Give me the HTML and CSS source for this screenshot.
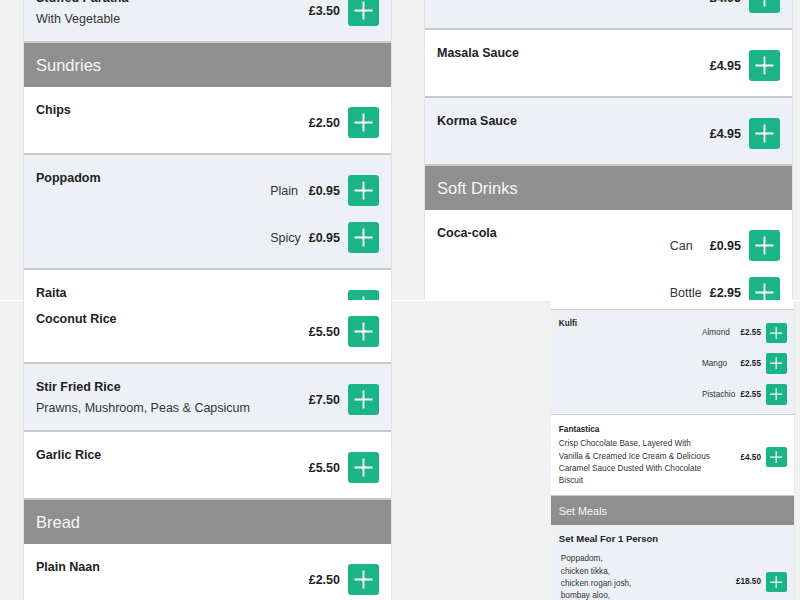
FILE: index.html
```html
<!DOCTYPE html>
<html lang="en">
<head>
<meta charset="utf-8">
<title>Menu</title>
<link rel="stylesheet" href="styles.css">
</head>
<body>
<main class="collage">
  <div class="strip">
    <section class="tile tile--left">
      <div class="card card--tl">
        <div class="item item--alt">
          <div class="item__info"><div class="item__name">Stuffed Paratha</div><div class="item__desc">With Vegetable</div></div>
          <div class="item__options item__options--single"><span class="price">£3.50</span><button class="add" aria-label="Add"><svg viewBox="0 0 31 31"><path d="M15.5 6.5v18M6.5 15.5h18"/></svg></button></div>
        </div>
        <h2 class="section-title">Sundries</h2>
        <div class="item">
          <div class="item__info"><div class="item__name">Chips</div></div>
          <div class="item__options item__options--single"><span class="price">£2.50</span><button class="add" aria-label="Add"><svg viewBox="0 0 31 31"><path d="M15.5 6.5v18M6.5 15.5h18"/></svg></button></div>
        </div>
        <div class="item item--alt">
          <div class="item__info"><div class="item__name">Poppadom</div></div>
          <div class="item__options">
            <span class="label">Plain</span><span class="price">£0.95</span><button class="add" aria-label="Add"><svg viewBox="0 0 31 31"><path d="M15.5 6.5v18M6.5 15.5h18"/></svg></button>
            <span class="label">Spicy</span><span class="price">£0.95</span><button class="add" aria-label="Add"><svg viewBox="0 0 31 31"><path d="M15.5 6.5v18M6.5 15.5h18"/></svg></button>
          </div>
        </div>
        <div class="item">
          <div class="item__info"><div class="item__name">Raita</div></div>
          <div class="item__options">
            <span class="label">Cucumber</span><span class="price">£1.50</span><button class="add" aria-label="Add"><svg viewBox="0 0 31 31"><path d="M15.5 6.5v18M6.5 15.5h18"/></svg></button>
          </div>
        </div>
      </div>
    </section>
    <section class="tile tile--right">
      <div class="card card--tr">
        <div class="item item--alt">
          <div class="item__info"><div class="item__name">Jalfrezi Sauce</div></div>
          <div class="item__options item__options--single"><span class="price">£4.95</span><button class="add" aria-label="Add"><svg viewBox="0 0 31 31"><path d="M15.5 6.5v18M6.5 15.5h18"/></svg></button></div>
        </div>
        <div class="item">
          <div class="item__info"><div class="item__name">Masala Sauce</div></div>
          <div class="item__options item__options--single"><span class="price">£4.95</span><button class="add" aria-label="Add"><svg viewBox="0 0 31 31"><path d="M15.5 6.5v18M6.5 15.5h18"/></svg></button></div>
        </div>
        <div class="item item--alt">
          <div class="item__info"><div class="item__name">Korma Sauce</div></div>
          <div class="item__options item__options--single"><span class="price">£4.95</span><button class="add" aria-label="Add"><svg viewBox="0 0 31 31"><path d="M15.5 6.5v18M6.5 15.5h18"/></svg></button></div>
        </div>
        <h2 class="section-title">Soft Drinks</h2>
        <div class="item">
          <div class="item__info"><div class="item__name">Coca-cola</div></div>
          <div class="item__options">
            <span class="label">Can</span><span class="price">£0.95</span><button class="add" aria-label="Add"><svg viewBox="0 0 31 31"><path d="M15.5 6.5v18M6.5 15.5h18"/></svg></button>
            <span class="label">Bottle</span><span class="price">£2.95</span><button class="add" aria-label="Add"><svg viewBox="0 0 31 31"><path d="M15.5 6.5v18M6.5 15.5h18"/></svg></button>
          </div>
        </div>
      </div>
    </section>
  </div>
  <div class="strip">
    <section class="tile tile--wide">
      <div class="card card--bl">
        <div class="item">
          <div class="item__info"><div class="item__name">Coconut Rice</div></div>
          <div class="item__options item__options--single"><span class="price">£5.50</span><button class="add" aria-label="Add"><svg viewBox="0 0 31 31"><path d="M15.5 6.5v18M6.5 15.5h18"/></svg></button></div>
        </div>
        <div class="item item--alt">
          <div class="item__info"><div class="item__name">Stir Fried Rice</div><div class="item__desc">Prawns, Mushroom, Peas &amp; Capsicum</div></div>
          <div class="item__options item__options--single"><span class="price">£7.50</span><button class="add" aria-label="Add"><svg viewBox="0 0 31 31"><path d="M15.5 6.5v18M6.5 15.5h18"/></svg></button></div>
        </div>
        <div class="item">
          <div class="item__info"><div class="item__name">Garlic Rice</div></div>
          <div class="item__options item__options--single"><span class="price">£5.50</span><button class="add" aria-label="Add"><svg viewBox="0 0 31 31"><path d="M15.5 6.5v18M6.5 15.5h18"/></svg></button></div>
        </div>
        <h2 class="section-title">Bread</h2>
        <div class="item">
          <div class="item__info"><div class="item__name">Plain Naan</div></div>
          <div class="item__options item__options--single"><span class="price">£2.50</span><button class="add" aria-label="Add"><svg viewBox="0 0 31 31"><path d="M15.5 6.5v18M6.5 15.5h18"/></svg></button></div>
        </div>
      </div>
    </section>
    <section class="tile tile--narrow">
      <div class="card card--mini">
        <div class="item">
          <div class="item__info"><div class="item__name">Gulab Jamun</div></div>
          <div class="item__options item__options--single"><span class="price">£2.95</span><button class="add" aria-label="Add"><svg viewBox="0 0 31 31"><path d="M15.5 6.5v18M6.5 15.5h18"/></svg></button></div>
        </div>
        <div class="item item--alt">
          <div class="item__info"><div class="item__name">Kulfi</div></div>
          <div class="item__options">
            <span class="label">Almond</span><span class="price">£2.55</span><button class="add" aria-label="Add"><svg viewBox="0 0 31 31"><path d="M15.5 6.5v18M6.5 15.5h18"/></svg></button>
            <span class="label">Mango</span><span class="price">£2.55</span><button class="add" aria-label="Add"><svg viewBox="0 0 31 31"><path d="M15.5 6.5v18M6.5 15.5h18"/></svg></button>
            <span class="label">Pistachio</span><span class="price">£2.55</span><button class="add" aria-label="Add"><svg viewBox="0 0 31 31"><path d="M15.5 6.5v18M6.5 15.5h18"/></svg></button>
          </div>
        </div>
        <div class="item">
          <div class="item__info"><div class="item__name">Fantastica</div><div class="item__desc item__desc--narrow">Crisp Chocolate Base, Layered With Vanilla &amp; Creamed Ice Cream &amp; Delicious Caramel Sauce Dusted With Chocolate Biscuit</div></div>
          <div class="item__options item__options--single"><span class="price">£4.50</span><button class="add" aria-label="Add"><svg viewBox="0 0 31 31"><path d="M15.5 6.5v18M6.5 15.5h18"/></svg></button></div>
        </div>
        <h2 class="section-title">Set Meals</h2>
        <div class="item item--alt">
          <div class="item__info"><div class="item__name item__name--meal">Set Meal For 1 Person</div><div class="item__desc item__desc--list">Poppadom,
chicken tikka,
chicken rogan josh,
bombay aloo,
pilau rice,
plain naan</div></div>
          <div class="item__options item__options--single"><span class="price">£18.50</span><button class="add" aria-label="Add"><svg viewBox="0 0 31 31"><path d="M15.5 6.5v18M6.5 15.5h18"/></svg></button></div>
        </div>
      </div>
    </section>
  </div>
</main>
</body>
</html>
```

FILE: styles.css
```css
* {
  box-sizing: border-box;
}

html, body {
  margin: 0;
  padding: 0;
  background: #f1f1f1;
}

body {
  font-family: "Liberation Sans", Arial, sans-serif;
  font-size: 12.5px;
  color: #222;
}

.collage {
  display: flex;
  flex-direction: column;
  width: 800px;
  height: 600px;
  overflow: hidden;
}

.strip {
  display: flex;
  flex: none;
}

.tile {
  flex: none;
  height: 300px;
  overflow: hidden;
  background: #f1f1f1;
}

.tile--left {
  width: 400px;
  padding-left: 24px;
}

.tile--right {
  width: 400px;
  padding-left: 25px;
}

.tile--wide {
  width: 551px;
  padding-left: 24px;
  border-top: 1px solid #fff;
}

.tile--narrow {
  width: 249px;
  border-top: 1px solid #fff;
}

.card {
  width: 367px;
  background: #fff;
  box-shadow: 0 0 0 1px #e3e3e3;
}

.card--tl {
  margin-top: -25px;
}

.card--tr {
  margin-top: -38px;
}

.card--bl {
  margin-top: -5px;
}

.card--mini {
  zoom: 0.656;
  width: 371px;
  margin-top: -55px;
}

.item {
  display: flex;
  align-items: center;
  justify-content: space-between;
  gap: 12px;
  min-height: 68px;
  padding: 12px;
  background: #fff;
  border-bottom: 2px solid #c7c9cc;
}

.item--alt {
  background: #edf1f6;
}

.item__info {
  align-self: flex-start;
  flex: 1;
  min-width: 0;
}

.item__name {
  font-weight: 700;
  line-height: 22px;
  color: #222;
}

.item__name--meal {
  font-size: 14.5px;
  line-height: 17px;
}

.item__desc {
  margin-top: 1px;
  line-height: 18.75px;
  color: #333;
}

.item__desc--narrow {
  max-width: 238px;
}

.item__desc--list {
  margin-top: 14px;
  padding-left: 3px;
  white-space: pre-line;
}

.item__options {
  flex: none;
  display: grid;
  grid-template-columns: auto auto auto;
  column-gap: 8px;
  row-gap: 16px;
  align-items: center;
  padding: 8px 0 3px;
}

.item__options--single {
  grid-template-columns: auto auto;
}

.label {
  color: #333;
}

.price {
  font-weight: 700;
  text-align: right;
  color: #222;
}

.add {
  display: flex;
  align-items: center;
  justify-content: center;
  width: 31px;
  height: 31px;
  padding: 0;
  border: none;
  border-radius: 3px;
  background: #1bb486;
}

.add svg {
  width: 31px;
  height: 31px;
  fill: none;
  stroke: #fff;
  stroke-width: 1.8;
}

.section-title {
  display: flex;
  align-items: center;
  height: 44px;
  margin: 0;
  padding: 0 12px;
  background: #8f8f8f;
  color: #f6f6f6;
  font-size: 16.5px;
  font-weight: 400;
}
```
